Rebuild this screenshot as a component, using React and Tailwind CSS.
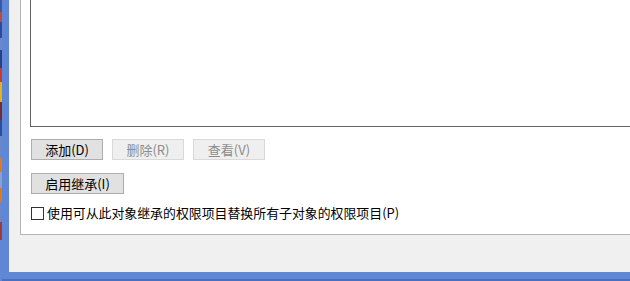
export default function App() {
  const font = { fontFamily: '"Noto Sans CJK SC", "Microsoft YaHei", sans-serif' };
  return (
    <div className="w-[630px] h-[281px] flex overflow-hidden bg-[#5f87d6]" style={font}>
      <div className="w-[2px] h-full flex flex-col">
        <div className="h-[12px] bg-[#3a5aa8]" />
        <div className="h-[10px] bg-[#c04a3a]" />
        <div className="h-[16px] bg-[#2c4b9a]" />
        <div className="h-[12px] bg-[#6f86c6]" />
        <div className="h-[18px] bg-[#2a3f86]" />
        <div className="h-[14px] bg-[#c83a30]" />
        <div className="h-[20px] bg-[#e2b418]" />
        <div className="h-[18px] bg-[#7a2a30]" />
        <div className="h-[16px] bg-[#2d4d9e]" />
        <div className="h-[22px] bg-[#6a86c8]" />
        <div className="h-[14px] bg-[#e07a18]" />
        <div className="h-[16px] bg-[#8aa0d0]" />
        <div className="h-[14px] bg-[#e07a18]" />
        <div className="h-[20px] bg-[#6d86c2]" />
        <div className="h-[18px] bg-[#a33a3a]" />
        <div className="flex-1 bg-[#5f87d6]" />
      </div>
      <div className="flex-1 flex flex-col">
        <div className="flex flex-1">
          <div className="w-[7px] bg-[#5f87d6]" />
          <div className="flex-1 bg-[#f0f0f0] flex flex-col">
            <div className="ml-[11px] h-[235px] bg-white border-l border-b border-[#b4b4b4] pl-[9px] flex flex-col">
              <div className="h-[127px] border-l border-b border-[#646464] bg-white" />
              <div className="flex gap-[9px] mt-[12px] ml-px">
                <button className="w-[72px] h-[21px] bg-[#e1e1e1] border border-[#adadad] text-[13px] text-black leading-none flex items-center justify-center">添加(D)</button>
                <button className="w-[72px] h-[21px] bg-[#efefef] border border-[#d9d9d9] text-[13px] text-[#8c8c8c] leading-none flex items-center justify-center">删除(R)</button>
                <button className="w-[72px] h-[21px] bg-[#efefef] border border-[#d9d9d9] text-[13px] text-[#8c8c8c] leading-none flex items-center justify-center">查看(V)</button>
              </div>
              <div className="flex mt-[13px] ml-px">
                <button className="w-[93px] h-[21px] bg-[#e1e1e1] border border-[#adadad] text-[13px] text-black leading-none flex items-center justify-center">启用继承(I)</button>
              </div>
              <div className="flex items-center mt-[13px] ml-px">
                <div className="w-[13px] h-[13px] border border-[#333333] bg-white" />
                <span className="ml-[3px] text-[12.9px] leading-none text-black whitespace-nowrap">使用可从此对象继承的权限项目替换所有子对象的权限项目(P)</span>
              </div>
            </div>
          </div>
        </div>
        <div className="h-[9px] flex flex-col">
          <div className="flex-1 bg-[#5f87d6]" />
          <div className="h-[2px] bg-[#4a6fc0]" />
        </div>
      </div>
    </div>
  );
}
